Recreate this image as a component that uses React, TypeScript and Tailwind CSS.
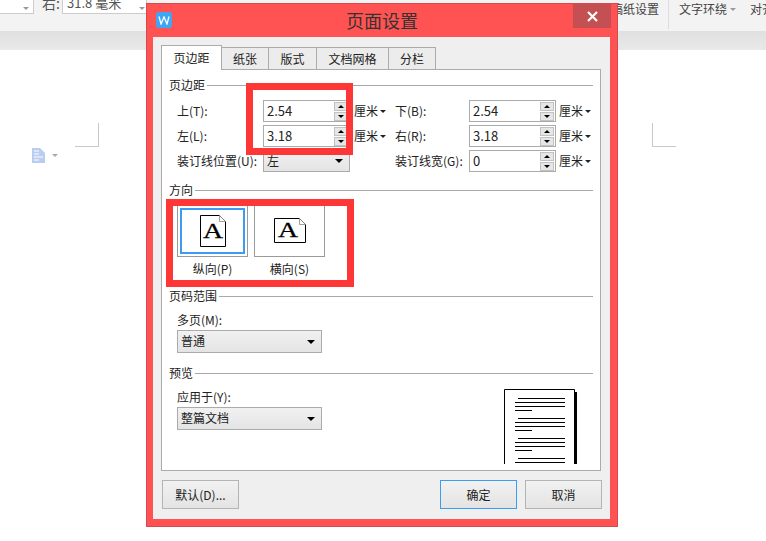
import type { ReactNode } from 'react';

const font = "font-['Noto_Sans_CJK_SC','Liberation_Sans',sans-serif]";

function Caret({ className = 'border-t-[#222]' }: { className?: string }) {
  return <span className={`inline-block w-0 h-0 border-x-[3px] border-x-transparent border-t-[3px] ${className}`} />;
}

function SectionHeader({ title, className = '' }: { title: string; className?: string }) {
  return (
    <div className={`flex items-center h-4 gap-[2px] ${className}`}>
      <span className="whitespace-nowrap">{title}</span>
      <span className="flex-1 h-px bg-[#a8a8a8]" />
    </div>
  );
}

function Spinner({ value }: { value: string }) {
  return (
    <div className="flex items-center justify-between w-[87px] h-[22px] bg-white border border-[#ababab] pl-[3px] pr-[1px] text-[13px]">
      <span>{value}</span>
      <div className="flex flex-col gap-[1px]">
        <div className="flex items-center justify-center w-[14px] h-[9px] bg-[#e6e6e6] border border-[#c2c2c2]">
          <span className="w-0 h-0 border-x-[3px] border-x-transparent border-b-[3px] border-b-black" />
        </div>
        <div className="flex items-center justify-center w-[14px] h-[9px] bg-[#e6e6e6] border border-[#c2c2c2]">
          <span className="w-0 h-0 border-x-[3px] border-x-transparent border-t-[3px] border-t-black" />
        </div>
      </div>
    </div>
  );
}

function Select({ value, className, height = 'h-[23px]' }: { value: string; className: string; height?: string }) {
  return (
    <div className={`flex items-center justify-between bg-gradient-to-b from-[#f1f1f1] to-[#e4e4e4] border border-[#ababab] pl-[3px] pr-[6px] ${height} ${className}`}>
      <span className="pb-px">{value}</span>
      <span className="w-0 h-0 border-x-[4px] border-x-transparent border-t-[4px] border-t-black" />
    </div>
  );
}

function Unit({ className = '' }: { className?: string }) {
  return (
    <div className={`flex items-center gap-[2px] ${className}`}>
      <span>厘米</span>
      <Caret />
    </div>
  );
}

function Row({ children }: { children: ReactNode }) {
  return <div className="flex items-center h-[22px] pl-[15px]">{children}</div>;
}

function Button({ label, primary }: { label: string; primary?: boolean }) {
  return (
    <div className={`flex items-center justify-center w-[77px] h-[29px] bg-gradient-to-b from-[#f1f1f1] to-[#e4e4e4] border ${primary ? 'border-[#3b9cf5]' : 'border-[#b4b4b4]'}`}>
      {label}
    </div>
  );
}

function Portrait() {
  return (
    <svg width="26" height="32" viewBox="0 0 26 32" fill="none">
      <path d="M.5.5H19.5L25.5 6.5V31.5H.5Z" fill="#fff" stroke="#000" />
      <path d="M19.5.5V6.5H25.5" fill="#fff" stroke="#888" strokeWidth="0.8" />
      <text x="13" y="23" textAnchor="middle" fontFamily="Liberation Serif, serif" fontSize="21" textLength="20" lengthAdjust="spacingAndGlyphs" fill="#000" stroke="#000" strokeWidth="0.3">A</text>
    </svg>
  );
}

function Landscape() {
  return (
    <svg width="32" height="25" viewBox="0 0 32 25" fill="none">
      <path d="M.5.5H25.5L31.5 6.5V24.5H.5Z" fill="#fff" stroke="#000" />
      <path d="M25.5.5V6.5H31.5" fill="#fff" stroke="#888" strokeWidth="0.8" />
      <text x="14" y="19" textAnchor="middle" fontFamily="Liberation Serif, serif" fontSize="21" textLength="20" lengthAdjust="spacingAndGlyphs" fill="#000" stroke="#000" strokeWidth="0.3">A</text>
    </svg>
  );
}

function PreviewPage() {
  const lines: [number, number, number][] = [];
  [9, 29, 49, 69].forEach((y) => {
    lines.push([14, 61, y], [11, 61, y + 4], [11, 61, y + 8], [11, 28, y + 12]);
  });
  return (
    <svg width="73" height="75" viewBox="0 0 73 75" className="block">
      <rect x="70" y="3" width="3" height="72" fill="#000" />
      <path d="M.5 75V.5H70.5V75" fill="#fff" stroke="#000" />
      {lines.map(([x1, x2, y]) => (
        <rect key={`${x1}-${y}`} x={x1} y={y} width={x2 - x1} height="1" fill="#000" />
      ))}
    </svg>
  );
}

const tabs = ['纸张', '版式', '文档网格', '分栏'];
const tabWidths = ['w-[47px]', 'w-[48px]', 'w-[72px]', 'w-[47px]'];

export default function App() {
  return (
    <div className={`relative w-[766px] h-[541px] overflow-hidden bg-white text-xs text-[#222] ${font}`}>
      {/* ribbon behind the dialog */}
      <div className="flex items-start justify-between h-[31px] bg-[#f3f3f3] overflow-hidden text-[#555]">
        <div className="flex items-center -mt-[10px] -ml-[8px] text-[14px]">
          <div className="flex items-center justify-end w-[42px] h-6 bg-white border border-[#ccc] pr-1 pt-[12px]"><Caret className="border-t-[#999]" /></div>
          <span className="ml-[8px] w-5 pt-[2px]">右:</span>
          <div className="flex items-center justify-between w-[85px] h-6 bg-white border border-[#ccc] pl-1 pr-[1px] pt-[2px] text-[13px]">
            <span>31.8 毫米</span>
            <span className="pt-[10px] flex"><Caret className="border-t-[#999]" /></span>
          </div>
        </div>
        <div className="flex items-start h-[29px] text-[12px] text-[#444]">
          <span className="mr-[9px] leading-[18px]">稿纸设置</span>
          <span className="w-px h-[29px] bg-[#ddd]" />
          <span className="ml-[10px] flex items-center gap-[3px] leading-[18px]">文字环绕<Caret className="border-t-[#999]" /></span>
          <span className="ml-[14px] w-[16px] overflow-hidden whitespace-nowrap leading-[18px]">对齐</span>
        </div>
      </div>
      <div className="h-[19px] bg-gradient-to-b from-[#e0e0e0] to-[#e9e9e9]" />

      {/* page crop marks */}
      <div className="absolute left-[75px] top-[123px] w-6 h-6 border-r border-b border-[#c8c8c8]" />
      <div className="absolute left-[652px] top-[123px] w-6 h-6 border-l border-b border-[#c8c8c8]" />
      <div className="absolute left-[32px] top-[148px] flex items-center gap-[7px]">
        <svg width="13" height="15" viewBox="0 0 13 15">
          <path d="M0 0H8L13 5V15H0Z" fill="#b9cdf0" />
          <path d="M2 3H7M2 6H7M2 9H11M2 12H7" stroke="#fff" strokeWidth="1" />
        </svg>
        <Caret className="border-t-[#aaa]" />
      </div>

      {/* dialog */}
      <div className="absolute left-[146px] top-[3px] w-[472px] h-[524px] flex flex-col bg-[#ff5252] border border-[#d44a4f]">
        <div className="relative flex items-center justify-center h-[33px] shrink-0">
          <span className="text-[18px] text-[#333] pb-[2px]">页面设置</span>
          <div className="absolute left-[9px] top-[8px] flex items-center justify-center w-4 h-4 rounded-[3px] bg-[#3ea6f6]">
            <svg width="12" height="9" viewBox="0 0 12 9" fill="none">
              <path d="M1 .5L3 8L6 1L9 8L11 .5" stroke="#fff" strokeWidth="1.3" />
            </svg>
          </div>
          <div className="absolute right-[6px] top-0 flex items-center justify-center w-[38px] h-6 bg-[#c55053]">
            <svg width="11" height="11" viewBox="0 0 11 11">
              <path d="M1 1L10 10M10 1L1 10" stroke="#fff" strokeWidth="2.2" />
            </svg>
          </div>
        </div>

        <div className="flex-1 ml-[6px] mr-[7px] mb-[7px] bg-[#efefef] px-[8px] pt-[8px] flex flex-col">
          <div className="flex items-end h-6 shrink-0">
            <div className="relative z-10 flex items-center justify-center w-[61px] h-[25px] -mb-px bg-white border border-b-0 border-[#ababab]">页边距</div>
            {tabs.map((tab, i) => (
              <div key={tab} className={`flex items-center justify-center h-[22px] bg-[#ececec] border border-b-0 border-l-0 border-[#ababab] ${tabWidths[i]}`}>
                {tab}
              </div>
            ))}
          </div>

          <div className="w-[440px] h-[402px] shrink-0 bg-white border border-[#ababab] pt-[7px] flex flex-col">
            <SectionHeader title="页边距" className="mx-[7px]" />
            <div className="flex flex-col gap-[3px] mt-[7px]">
              <Row>
                <span className="w-[86px]">上(T):</span>
                <Spinner value="2.54" />
                <Unit className="w-[41px] ml-1" />
                <span className="w-[74px]">下(B):</span>
                <Spinner value="2.54" />
                <Unit className="ml-[3px]" />
              </Row>
              <Row>
                <span className="w-[86px]">左(L):</span>
                <Spinner value="3.18" />
                <Unit className="w-[41px] ml-1" />
                <span className="w-[74px]">右(R):</span>
                <Spinner value="3.18" />
                <Unit className="ml-[3px]" />
              </Row>
              <Row>
                <span className="w-[86px]">装订线位置(U):</span>
                <Select value="左" className="w-[87px]" height="h-[22px]" />
                <span className="w-[41px] ml-1" />
                <span className="w-[74px] whitespace-nowrap">装订线宽(G):</span>
                <Spinner value="0" />
                <Unit className="ml-[3px]" />
              </Row>
            </div>

            <SectionHeader title="方向" className="mx-[7px] mt-[10px]" />
            <div className="flex gap-[6px] pl-[15px] mt-[6px]">
              <div className="flex flex-col items-center w-[71px]">
                <div className="w-[71px] h-[53px] border border-[#9a9a9a] pt-[3px] pb-[2px] px-[2px]">
                  <div className="flex items-center justify-center w-full h-full border-[2px] border-[#3d9bf3]">
                    <Portrait />
                  </div>
                </div>
                <span className="mt-1 h-4 leading-4">纵向(P)</span>
              </div>
              <div className="flex flex-col items-center w-[71px]">
                <div className="flex items-center justify-center w-[71px] h-[53px] border border-[#9a9a9a]">
                  <Landscape />
                </div>
                <span className="mt-1 h-4 leading-4">横向(S)</span>
              </div>
            </div>

            <SectionHeader title="页码范围" className="mx-[7px] mt-[11px]" />
            <div className="pl-[15px] mt-2 h-4 leading-4">多页(M):</div>
            <Select value="普通" className="w-[145px] ml-[15px] mt-[2px]" />

            <SectionHeader title="预览" className="mx-[7px] mt-3" />
            <div className="flex justify-between pl-[15px] pr-[23px] mt-2">
              <div>
                <div className="h-4 leading-4">应用于(Y):</div>
                <Select value="整篇文档" className="w-[145px] mt-[2px]" />
              </div>
              <PreviewPage />
            </div>
          </div>

          <div className="flex items-center justify-between mt-[9px] pl-px">
            <Button label="默认(D)..." />
            <div className="flex gap-2">
              <Button label="确定" primary />
              <Button label="取消" />
            </div>
          </div>
        </div>
      </div>

      {/* annotations drawn over the dialog */}
      <div className="absolute left-[246px] top-[83px] w-[107px] h-[72px] border-[7px] border-[#ff3636]" />
      <div className="absolute left-[166px] top-[199px] w-[188px] h-[88px] border-[7px] border-[#ff3636]" />
    </div>
  );
}
